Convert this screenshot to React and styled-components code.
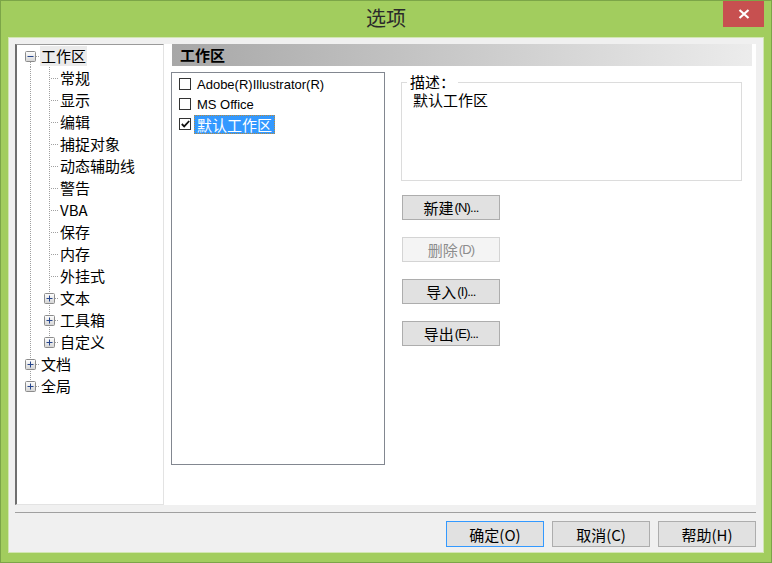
import React from 'react';
import styled, { createGlobalStyle } from 'styled-components';

const GlobalStyle = createGlobalStyle`
  html, body { margin: 0; padding: 0; background: #a2cd5e; }
  body { font-family: "Noto Sans CJK SC", "Liberation Sans", sans-serif; }
  * { box-sizing: border-box; }
`;

const CJK = `"Noto Sans CJK SC", "Liberation Sans", sans-serif`;

const Window = styled.div`
  position: relative;
  width: 772px;
  height: 563px;
  background: #a2cd5e;
  border: 1px solid #7ca548;
  display: flex;
  flex-direction: column;
  padding: 0 7px 9px 7px;
`;

const TitleBar = styled.div`
  height: 36px;
  margin: 0 -7px;
  display: grid;
  grid-template-columns: 1fr auto 1fr;
  align-items: center;
`;

const Title = styled.div`
  grid-column: 2;
  font: 20px/36px ${CJK};
  color: #2a2a2a;
  margin-top: -2px;
`;

const CloseBtn = styled.div`
  grid-column: 3;
  justify-self: end;
  align-self: start;
  width: 41px;
  height: 26px;
  margin-right: 7px;
  background: #c75050;
  display: flex;
  align-items: center;
  justify-content: center;
`;

const Client = styled.div`
  flex: 1;
  background: #f0f0f0;
  border: 1px solid #d2e6b2;
  display: flex;
  flex-direction: column;
  padding: 6px 7px 5px 6px;
`;

const Main = styled.div`
  display: flex;
  height: 461px;
`;

const TreePanel = styled.div`
  width: 149px;
  height: 100%;
  background: #fff;
  border-left: 2px solid #6f6f6f;
  border-top: 1px solid #9a9a9a;
  border-right: 1px solid #e3e3e3;
  border-bottom: 1px solid #e3e3e3;
  padding: 0 0 0 4px;
  font: 15px/22px ${CJK};
  color: #000;
`;

const TreeRow = styled.div`
  display: flex;
  height: 22px;
  align-items: stretch;
`;

const Cell = styled.div`
  position: relative;
  width: 19px;
  flex: none;
  ${p => p.$v && `
    &::before {
      content: "";
      position: absolute;
      left: 9px;
      width: 1px;
      top: ${p.$v === 'first' ? '50%' : '0'};
      bottom: ${p.$v === 'last' ? '50%' : '0'};
      background-image: linear-gradient(to bottom, #a0a0a0 50%, transparent 50%);
      background-size: 1px 2px;
    }
  `}
  ${p => p.$h && `
    &::after {
      content: "";
      position: absolute;
      left: 10px;
      right: 0;
      top: 11px;
      height: 1px;
      background-image: linear-gradient(to right, #a0a0a0 50%, transparent 50%);
      background-size: 2px 1px;
      background-position: 1px 0;
    }
  `}
`;

const Expander = styled.svg`
  position: absolute;
  left: 4px;
  top: 6px;
  z-index: 1;
`;

const TreeLabel = styled.span`
  display: inline-block;
  align-self: center;
  height: 20px;
  line-height: 20px;
  padding: 0 1px;
  background: ${p => (p.$sel ? '#ebebeb' : 'transparent')};
  white-space: nowrap;
`;

const RightPanel = styled.div`
  flex: 1;
  background: #fff;
  display: flex;
  flex-direction: column;
`;

const Header = styled.div`
  height: 22px;
  margin: 0 4px 0 8px;
  background: linear-gradient(to right, #a7a7a7, #ececec);
  font: 700 15px/22px ${CJK};
  color: #000;
  padding-left: 8px;
`;

const Body = styled.div`
  display: flex;
  align-items: flex-start;
  padding: 6px 0 0 7px;
`;

const ListBox = styled.div`
  width: 214px;
  height: 393px;
  border: 1px solid #828790;
  padding: 1px 0 0 7px;
`;

const ListRow = styled.div`
  display: flex;
  align-items: center;
  height: 20px;
`;

const Check = styled.span`
  width: 12px;
  height: 12px;
  border: 1px solid #333;
  background: #fff;
  flex: none;
  display: flex;
  align-items: center;
  justify-content: center;
`;

const ItemText = styled.span`
  margin-left: ${p => (p.$sel ? '3px' : '5px')};
  padding: 0 ${p => (p.$sel ? '2px' : '0')};
  height: 19px;
  display: flex;
  align-items: center;
  white-space: nowrap;
  font: ${p => (p.$cjk ? `15px/17px ${CJK}` : `13px/17px "Liberation Sans", sans-serif`)};
  color: ${p => (p.$sel ? '#fff' : '#000')};
  background: ${p => (p.$sel ? '#3399ff' : 'transparent')};
  border: 1px ${p => (p.$sel ? 'dotted #b88a3c' : 'solid transparent')};
`;

const SideCol = styled.div`
  width: 341px;
  margin: 2px 0 0 16px;
  display: flex;
  flex-direction: column;
  align-items: flex-start;
`;

const Group = styled.fieldset`
  width: 341px;
  height: 107px;
  margin: 0;
  padding: 1px 11px 0;
  border: 1px solid #dcdcdc;
  color: #000;
`;

const Legend = styled.legend`
  padding: 0 3px;
  margin-left: -6px;
  font: 15px/16px ${CJK};
`;

const Desc = styled.div`
  font: 15px/17px ${CJK};
`;

const ButtonStack = styled.div`
  display: flex;
  flex-direction: column;
  gap: 17px;
  margin: 14px 0 0 1px;
`;

const Btn = styled.button`
  width: 98px;
  height: ${p => p.$h || 25}px;
  padding: 0;
  border: 1px solid ${p => (p.$default ? '#3399ff' : p.disabled ? '#d4d4d4' : '#adadad')};
  background: ${p => (p.disabled ? '#f4f4f4' : '#e1e1e1')};
  color: ${p => (p.disabled ? '#8c8c8c' : '#000')};
  font: 15px/1 ${CJK};
  display: flex;
  align-items: center;
  justify-content: center;
  border-radius: 0;
`;

const Key = styled.span`
  font: 13px/1 "Liberation Sans", sans-serif;
  letter-spacing: -0.8px;
  margin-left: 1px;
`;

const Separator = styled.div`
  height: 1px;
  margin-top: 7px;
  background: #a0a0a0;
`;

const Footer = styled.div`
  display: flex;
  justify-content: flex-end;
  gap: 8px;
  margin-top: 8px;
`;

const ExpIcon = ({ plus }) => (
  <Expander width="11" height="11" viewBox="0 0 11 11">
    <defs>
      <linearGradient id={plus ? 'gp' : 'gm'} x1="0" y1="0" x2="0" y2="1">
        <stop offset="0" stopColor="#ffffff" />
        <stop offset="1" stopColor="#d4d4d4" />
      </linearGradient>
    </defs>
    <rect x="0.5" y="0.5" width="10" height="10" rx="1" fill={`url(#${plus ? 'gp' : 'gm'})`} stroke="#8c8c8c" />
    <line x1="2.5" y1="5.5" x2="8.5" y2="5.5" stroke="#27468c" />
    {plus && <line x1="5.5" y1="2.5" x2="5.5" y2="8.5" stroke="#27468c" />}
  </Expander>
);

const treeRows = [
  { label: '工作区', guides: [], pos: 'first', exp: 'minus', sel: true },
  ...['常规', '显示', '编辑', '捕捉对象', '动态辅助线', '警告', 'VBA', '保存', '内存', '外挂式'].map(l => ({
    label: l, guides: [true], pos: 'mid',
  })),
  { label: '文本', guides: [true], pos: 'mid', exp: 'plus' },
  { label: '工具箱', guides: [true], pos: 'mid', exp: 'plus' },
  { label: '自定义', guides: [true], pos: 'last', exp: 'plus' },
  { label: '文档', guides: [], pos: 'mid', exp: 'plus' },
  { label: '全局', guides: [], pos: 'last', exp: 'plus' },
];

const listItems = [
  { label: 'Adobe(R)Illustrator(R)', checked: false },
  { label: 'MS Office', checked: false },
  { label: '默认工作区', checked: true, sel: true, cjk: true },
];

export default function App() {
  return (
    <>
      <GlobalStyle />
      <Window>
        <TitleBar>
          <Title>选项</Title>
          <CloseBtn>
            <svg width="12" height="10" viewBox="0 0 12 10">
              <path d="M1.5 1 L10.5 9 M10.5 1 L1.5 9" stroke="#fff" strokeWidth="2.2" fill="none" />
            </svg>
          </CloseBtn>
        </TitleBar>
        <Client>
          <Main>
            <TreePanel>
              {treeRows.map((r, i) => (
                <TreeRow key={i}>
                  {r.guides.map((g, j) => (
                    <Cell key={j} $v={g ? 'mid' : null} />
                  ))}
                  <Cell $v={r.pos} $h>
                    {r.exp && <ExpIcon plus={r.exp === 'plus'} />}
                  </Cell>
                  <TreeLabel $sel={r.sel}>{r.label}</TreeLabel>
                </TreeRow>
              ))}
            </TreePanel>
            <RightPanel>
              <Header>工作区</Header>
              <Body>
                <ListBox>
                  {listItems.map((it, i) => (
                    <ListRow key={i}>
                      <Check>
                        {it.checked && (
                          <svg width="9" height="8" viewBox="0 0 9 8">
                            <path d="M0.8 4 L3.2 6.4 L8.2 1" stroke="#111" strokeWidth="1.8" fill="none" />
                          </svg>
                        )}
                      </Check>
                      <ItemText $sel={it.sel} $cjk={it.cjk}>{it.label}</ItemText>
                    </ListRow>
                  ))}
                </ListBox>
                <SideCol>
                  <Group>
                    <Legend>描述：</Legend>
                    <Desc>默认工作区</Desc>
                  </Group>
                  <ButtonStack>
                    <Btn>新建<Key>(N)...</Key></Btn>
                    <Btn disabled>删除<Key>(D)</Key></Btn>
                    <Btn>导入<Key>(I)...</Key></Btn>
                    <Btn>导出<Key>(E)...</Key></Btn>
                  </ButtonStack>
                </SideCol>
              </Body>
            </RightPanel>
          </Main>
          <Separator />
          <Footer>
            <Btn $h={26} $default>确定(O)</Btn>
            <Btn $h={26}>取消(C)</Btn>
            <Btn $h={26}>帮助(H)</Btn>
          </Footer>
        </Client>
      </Window>
    </>
  );
}
